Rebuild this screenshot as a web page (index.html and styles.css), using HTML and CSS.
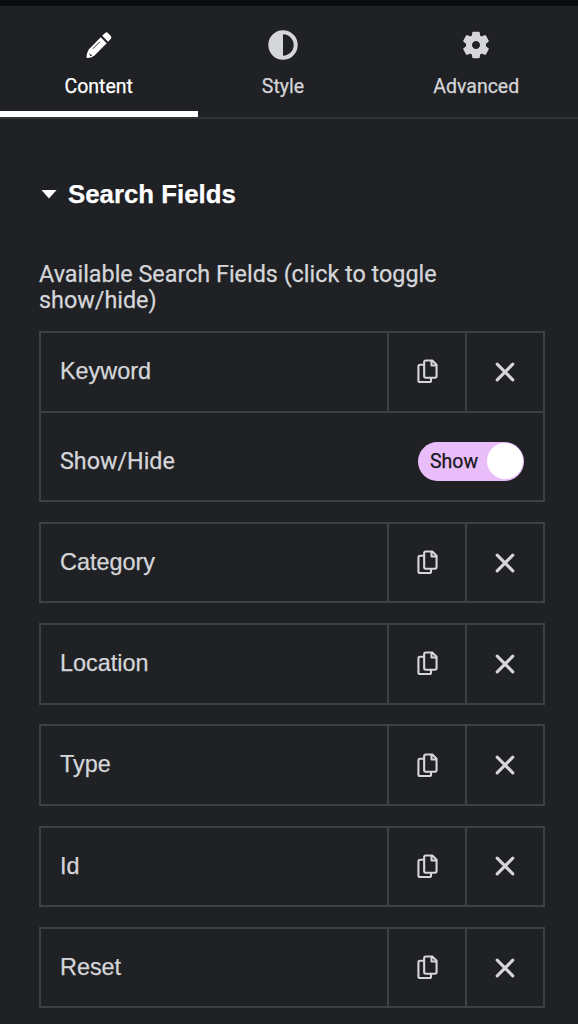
FILE: index.html
```html
<!DOCTYPE html>
<html lang="en">
<head>
<meta charset="utf-8">
<title>Search Fields</title>
<link rel="stylesheet" href="styles.css">
</head>
<body>
<svg class="defs" aria-hidden="true">
  <symbol id="copy" viewBox="0 0 22 26"><path d="M7 6H3.200Q1.500 6 1.500 7.700V22.300Q1.500 24 3.200 24H13Q14.700 24 14.700 22.300V20M9.200 1.500H16L20.500 6V17.800Q20.500 19.500 18.800 19.500H9.200Q7.500 19.500 7.500 17.800V3.200Q7.500 1.500 9.200 1.500ZM15.200 2V6.700H20.200" fill="none" stroke="currentColor" stroke-width="2.200" stroke-linejoin="round"/></symbol>
  <symbol id="close" viewBox="0 0 20 20"><path d="M2.200 2.200L17.800 17.800M17.800 2.200L2.200 17.800" fill="none" stroke="currentColor" stroke-width="3.100" stroke-linecap="round"/></symbol>
</svg>
<nav class="tabs">
  <div class="tab tab-content active">
    <svg class="tab-icon" viewBox="0 0 30 30"><path d="M16.800 6.800L23.200 13.200L10.200 26.200Q7 29 1.700 29Q1.300 24 4 19.700Z" fill="currentColor"/><path d="M18.400 5.200L21.500 2.100Q23 .8 24.500 2.100L27.700 5.300Q29 6.800 27.700 8.300L24.700 11.500Z" fill="currentColor"/><path d="M8.500 19L16 11.500" stroke="#202124" stroke-width="1"/><path d="M4.500 23Q5 25.500 8 26L5.500 27Z" fill="#202124"/></svg>
    <span>Content</span>
  </div>
  <div class="tab tab-style">
    <svg class="tab-icon" viewBox="0 0 30 30"><circle cx="15" cy="15" r="12.700" fill="none" stroke="currentColor" stroke-width="4"/><path d="M15 1A14 14 0 0 0 15 29Z" fill="currentColor"/></svg>
    <span>Style</span>
  </div>
  <div class="tab tab-advanced">
    <svg class="tab-icon" viewBox="0 0 30 30"><path fill="currentColor" fill-rule="evenodd" stroke="currentColor" stroke-width="2" stroke-linejoin="round" d="M12 1.700H18L18.500 5.500L21 6.900L24.700 5.400L27.700 10.700L24.700 13.100V16.900L27.700 19.300L24.700 24.600L21 23.100L18.500 24.500L18 28.300H12L11.500 24.500L9 23.100L5.300 24.600L2.300 19.300L5.300 16.900V13.100L2.300 10.700L5.300 5.400L9 6.900L11.500 5.500ZM15 9.700A5.300 5.300 0 1 0 15 20.300A5.300 5.300 0 1 0 15 9.700Z"/></svg>
    <span>Advanced</span>
  </div>
</nav>
<main class="panel">
  <h2 class="section-title"><span class="caret"></span><span>Search Fields</span></h2>
  <p class="label">Available Search Fields (click to toggle show/hide)</p>
  <div class="fields">
    <section class="field">
      <div class="row"><span class="name">Keyword</span><span class="action"><svg class="copy"><use href="#copy"/></svg></span><span class="action"><svg class="close"><use href="#close"/></svg></span></div>
      <div class="control"><span>Show/Hide</span><span class="switch"><span>Show</span><i class="knob"></i></span></div>
    </section>
    <section class="field"><div class="row"><span class="name">Category</span><span class="action"><svg class="copy"><use href="#copy"/></svg></span><span class="action"><svg class="close"><use href="#close"/></svg></span></div></section>
    <section class="field"><div class="row"><span class="name">Location</span><span class="action"><svg class="copy"><use href="#copy"/></svg></span><span class="action"><svg class="close"><use href="#close"/></svg></span></div></section>
    <section class="field"><div class="row"><span class="name">Type</span><span class="action"><svg class="copy"><use href="#copy"/></svg></span><span class="action"><svg class="close"><use href="#close"/></svg></span></div></section>
    <section class="field"><div class="row"><span class="name">Id</span><span class="action"><svg class="copy"><use href="#copy"/></svg></span><span class="action"><svg class="close"><use href="#close"/></svg></span></div></section>
    <section class="field"><div class="row"><span class="name">Reset</span><span class="action"><svg class="copy"><use href="#copy"/></svg></span><span class="action"><svg class="close"><use href="#close"/></svg></span></div></section>
  </div>
</main>
</body>
</html>
```
FILE: styles.css
```css
* { box-sizing: border-box; }
body {
  margin: 0;
  height: 1024px;
  overflow: hidden;
  background: #202124;
  border-top: 6px solid #0c0d0f;
  color: #d5d6da;
  font-family: Roboto, sans-serif;
  -webkit-text-stroke: .25px currentColor;
}
.defs { display: none; }
svg { display: block; }
.tabs {
  display: grid;
  grid-template-columns: 197.500px 171px 1fr;
  height: 113px;
  border-bottom: 2px solid #333438;
}
.tab {
  display: flex;
  flex-direction: column;
  align-items: center;
  padding-top: 23.500px;
  font-size: 19.500px;
  line-height: 24px;
  gap: 15.500px;
}
.tab-advanced { padding-left: 6px; }
.active { color: #fff; border-bottom: 6px solid #fff; }
.tab-icon { width: 30px; height: 30px; }
.tab-content .tab-icon, .tab-advanced .tab-icon { width: 28px; height: 28px; margin: 1px; }
.panel { padding: 59px 33px 0 39px; }
.section-title {
  display: flex;
  align-items: center;
  gap: 11px;
  margin: 0;
  padding-left: 2px;
  height: 32px;
  color: #fff;
  font: bold 25.800px/32px "Liberation Sans", sans-serif;
}
.caret {
  width: 16px;
  height: 9px;
  background: #fff;
  clip-path: polygon(0 0, 100% 0, 50% 100%);
}
.label { margin: 51px 0 18px; font-size: 23.350px; line-height: 26px; }
.fields { display: flex; flex-direction: column; gap: 19.750px; }
.field { border: 2px solid #3f4045; }
.row { display: grid; grid-template-columns: 1fr 78px 78px; height: 77.500px; }
.name {
  padding-left: 19px;
  font: 23.400px/77.500px "Liberation Sans", sans-serif;
}
.action { display: grid; place-items: center; border-left: 2px solid #3f4045; }
.copy { width: 21px; height: 25px; margin-left: 1px; }
.close { width: 20px; height: 20px; }
.control {
  display: flex;
  align-items: center;
  justify-content: space-between;
  height: 89.500px;
  padding: 10px 19px 0 19px;
  border-top: 2px solid #3f4045;
  font-size: 23.300px;
}
.switch {
  display: flex;
  align-items: center;
  justify-content: space-between;
  width: 106px;
  height: 39px;
  padding: 0 1px 0 12px;
  border-radius: 20px;
  background: #e9bcfa;
  color: #17171b;
  font-size: 19.500px;
}
.knob { width: 36px; height: 36px; border-radius: 50%; background: #fff; }
```
